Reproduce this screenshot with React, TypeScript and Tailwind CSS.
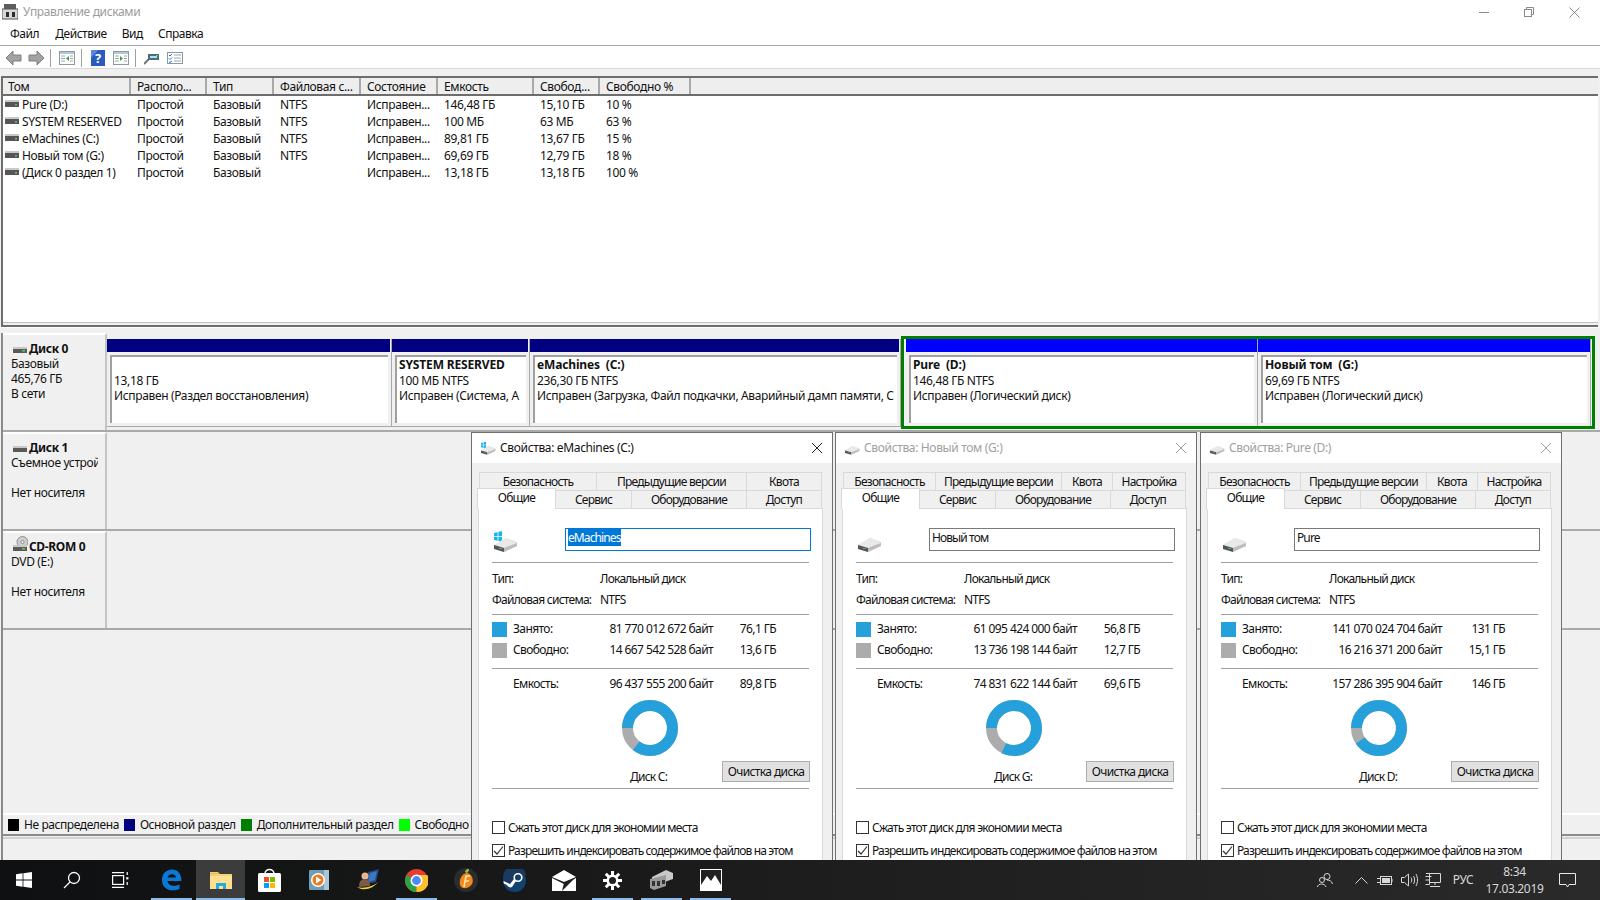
import React from 'react';

const font = { fontFamily: '"Noto Sans", "Liberation Sans", sans-serif' };

function Drive({ w = 24, win = false }: { w?: number; win?: boolean }) {
  return (
    <svg width={w} height={w * 0.92} viewBox="0 0 24 22">
      {win && (
        <g fill="#15b4ec">
          <path d="M0 3 L3.6 2.2 V6 H0Z" />
          <path d="M4.4 2 L8 1 V6 H4.4Z" />
          <path d="M0 6.8 H3.6 V10.6 L0 10Z" />
          <path d="M4.4 6.8 H8 V11.8 L4.4 11Z" />
        </g>
      )}
      <path d="M0 15 L12 8 L23 12 L23 16 L10 21 L0 18Z" fill="#d9d9d9" />
      <path d="M0 15 L10 18 L23 13 L12 8Z" fill="#e9e9e9" />
      <path d="M0 15 L10 18 V22 L0 19Z" fill="#555" />
      <path d="M10 18 L23 13 V16 L10 22Z" fill="#bdbdbd" />
      <rect x="5" y="18" width="3" height="1" fill="#3fbf4f" />
    </svg>
  );
}

function SmallDisk() {
  return (
    <svg width="14" height="9" viewBox="0 0 14 9" className="shrink-0">
      <rect x="0" y="0" width="14" height="2" fill="#c8c8c8" />
      <rect x="0" y="2" width="14" height="5" fill="#555" />
      <rect x="10" y="4" width="2" height="1.5" fill="#3ddc4a" />
    </svg>
  );
}

function BigDisk({ cd = false, green = true }: { cd?: boolean; green?: boolean }) {
  return (
    <svg width="15" height="16" viewBox="0 0 15 16" className="shrink-0">
      {cd && (
        <g>
          <circle cx="9.5" cy="6" r="5.5" fill="#cfcfcf" stroke="#8e8e8e" />
          <circle cx="9.5" cy="6" r="1.6" fill="#f4f4f4" stroke="#8e8e8e" />
        </g>
      )}
      <rect x="0" y="9" width="14" height="2" fill="#c8c8c8" />
      <rect x="0" y="11" width="14" height="4" fill="#5a5a5a" />
      {green && <rect x="9" y="12" width="3" height="1.5" fill="#3ddc4a" />}
    </svg>
  );
}

function Arrow({ flip = false }: { flip?: boolean }) {
  return (
    <svg width="17" height="16" viewBox="0 0 17 16" style={flip ? { transform: 'scaleX(-1)' } : undefined}>
      <path d="M8 1 L1 8 L8 15 V11 H16 V5 H8Z" fill="#a3a3a3" stroke="#7e7e7e" strokeWidth="1" />
    </svg>
  );
}

function PaneIcon({ right = false }: { right?: boolean }) {
  return (
    <svg width="16" height="14" viewBox="0 0 16 14">
      <rect x="0.5" y="0.5" width="15" height="13" fill="#fff" stroke="#8a9aa5" />
      <rect x="1" y="1" width="14" height="2" fill="#b9c6cf" />
      <path d="M2 5 H6 M2 7.5 H6 M2 10 H6 M11 5 H14 M11 7.5 H14 M11 10 H14" stroke="#9aa7b0" />
      {right ? <path d="M7 5 L10 7.5 L7 10Z" fill="#27a844" /> : <path d="M10 5 L7 7.5 L10 10Z" fill="#27a844" />}
    </svg>
  );
}

function Toolbar() {
  return (
    <div className="flex items-center h-[22px] pt-[2px] pl-[5px] bg-white shrink-0">
      <Arrow />
      <div className="w-[6px]" />
      <Arrow flip />
      <div className="w-px h-[18px] bg-[#a0a0a0] ml-[5px] mr-[8px]" />
      <PaneIcon />
      <div className="w-px h-[18px] bg-[#a0a0a0] ml-[6px] mr-[9px]" />
      <svg width="14" height="16" viewBox="0 0 14 16">
        <rect width="14" height="16" fill="#2a5bbd" />
        <path d="M0 0 H7 L0 8Z" fill="#5c8ae0" />
      </svg>
      <span className="w-0 text-white text-[13px] font-bold -translate-x-[10px] leading-none">?</span>
      <div className="w-[8px]" />
      <PaneIcon right />
      <div className="w-px h-[18px] bg-[#a0a0a0] ml-[6px] mr-[8px]" />
      <svg width="15" height="14" viewBox="0 0 15 14">
        <path d="M0 13 L6 7" stroke="#777" strokeWidth="2" />
        <rect x="4" y="3" width="11" height="6" fill="#4d6b78" />
        <rect x="6" y="5" width="7" height="2" fill="#aee2f2" />
        <rect x="12" y="4" width="2" height="1" fill="#3ddc4a" />
      </svg>
      <div className="w-[8px]" />
      <svg width="16" height="12" viewBox="0 0 16 12">
        <rect x="0.5" y="0.5" width="15" height="11" fill="#fff" stroke="#8a9aa5" />
        <path d="M2 3 L3 4 L5 2 M2 6.5 L3 7.5 L5 5.5 M2 10 L3 10.5 L5 9" stroke="#2b6fc9" fill="none" />
        <path d="M7 3 H14 M7 6 H14 M7 9 H14" stroke="#9aa7b0" />
      </svg>
    </div>
  );
}

const cols = [
  ['Том', 128],
  ['Располо...', 76],
  ['Тип', 67],
  ['Файловая с...', 87],
  ['Состояние', 77],
  ['Емкость', 96],
  ['Свобод...', 66],
  ['Свободно %', 91],
] as const;

const rows = [
  ['Pure (D:)', 'Простой', 'Базовый', 'NTFS', 'Исправен...', '146,48 ГБ', '15,10 ГБ', '10 %'],
  ['SYSTEM RESERVED', 'Простой', 'Базовый', 'NTFS', 'Исправен...', '100 МБ', '63 МБ', '63 %'],
  ['eMachines (C:)', 'Простой', 'Базовый', 'NTFS', 'Исправен...', '89,81 ГБ', '13,67 ГБ', '15 %'],
  ['Новый том (G:)', 'Простой', 'Базовый', 'NTFS', 'Исправен...', '69,69 ГБ', '12,79 ГБ', '18 %'],
  ['(Диск 0 раздел 1)', 'Простой', 'Базовый', '', 'Исправен...', '13,18 ГБ', '13,18 ГБ', '100 %'],
];

function VolumeTable() {
  return (
    <div className="h-[251px] border-t-2 border-l-2 border-b-2 border-[#6d6d6d] overflow-hidden flex flex-col">
      <div className="flex h-[18px] bg-[#eeeeee] border-b-2 border-[#6d6d6d] shrink-0">
        {cols.map(([c, w], i) => (
          <div key={c} style={{ width: w }} className={`shrink-0 border-r-2 border-[#a9a9a9] leading-[17px] truncate ${i === 0 ? 'pl-[5px]' : 'pl-[6px]'}`}>
            {c}
          </div>
        ))}
      </div>
      <div className="flex-1 bg-white">
        {rows.map((r) => (
          <div key={r[0]} className="flex h-[17px] leading-[17px]">
            {r.map((v, i) => (
              <div key={i} style={{ width: cols[i][1] }} className={`shrink-0 whitespace-nowrap ${i === 0 ? 'pl-[2px] flex items-center gap-[3px]' : 'pl-[6px]'}`}>
                {i === 0 && <SmallDisk />}
                {v}
              </div>
            ))}
          </div>
        ))}
      </div>
      <div className="h-[3px] shrink-0 bg-[#f0f0f0] border-t border-[#c0c0c0]" />
    </div>
  );
}

function Partition({ w, color, name, l1, l2, navy }: { w: number; color: string; name?: string; l1: string; l2: string; navy?: boolean }) {
  return (
    <div style={{ width: w }} className={`shrink-0 flex flex-col border-r border-[#a9a9a9] ${navy ? 'mt-[3px] mb-[2px] border-b' : ''}`}>
      <div className={`h-[13px] ${navy ? 'mr-[1px]' : ''}`} style={{ background: color }} />
      <div className="flex-1 pt-[3px] pl-[3px] pr-[3px] pb-[3px] min-h-0">
        <div className="h-full bg-white border-t-2 border-l-2 border-[#a0a0a0] pl-[2px] leading-[15.5px] overflow-hidden whitespace-nowrap">
          <div className="h-[15.5px] font-bold whitespace-pre tracking-[-0.15px]">{name}</div>
          <div>{l1}</div>
          <div>{l2}</div>
        </div>
      </div>
    </div>
  );
}

function DiskRow({ h, icon, name, lines, children }: { h: number; icon: React.ReactNode; name: string; lines: string[]; children?: React.ReactNode }) {
  return (
    <div style={{ height: h }} className="flex border-b-2 border-[#a9a9a9]">
      <div className="w-[104px] shrink-0 border-r-2 border-[#c4c4c4] border-t-2 border-t-white pl-[8px] pt-[4px] leading-[15px] overflow-hidden">
        <div className="flex items-end h-[17px] ml-[2px]">
          <span className="mb-[2px] mr-[1px]">{icon}</span>
          <span className="font-bold text-[12px]">{name}</span>
        </div>
        <div className="w-[87px] overflow-hidden whitespace-nowrap">
          {lines.map((l, i) => (
            <div key={i} className="h-[15px]">{l}</div>
          ))}
        </div>
      </div>
      <div className="flex-1 flex items-stretch pt-[3px] pb-[1px] min-w-0">{children}</div>
    </div>
  );
}

function Legend() {
  const items: [string, string][] = [
    ['#000000', 'Не распределена'],
    ['#000080', 'Основной раздел'],
    ['#008000', 'Дополнительный раздел'],
    ['#00ff00', 'Свободно'],
  ];
  return (
    <div className="flex items-center h-[21px] pl-[5px] gap-[5px] border-t-2 border-white tracking-[-0.42px]">
      {items.map(([c, t]) => (
        <div key={t} className="flex items-center gap-[5px]">
          <div className="w-[11px] h-[12px]" style={{ background: c }} />
          <span>{t}</span>
        </div>
      ))}
    </div>
  );
}

function Donut({ used }: { used: number }) {
  const r = 22.5;
  const c = 2 * Math.PI * r;
  return (
    <svg width="58" height="58" viewBox="0 0 58 58">
      <circle cx="29" cy="29" r={r} fill="none" stroke="#acacac" strokeWidth="11" />
      <circle
        cx="29"
        cy="29"
        r={r}
        fill="none"
        stroke="#26a0da"
        strokeWidth="11"
        strokeDasharray={`${c * used} ${c}`}
        transform="rotate(180 29 29)"
      />
    </svg>
  );
}

type DlgProps = {
  title: string;
  active?: boolean;
  label: string;
  letter: string;
  used: [string, string];
  free: [string, string];
  cap: [string, string];
  quota: boolean;
  win?: boolean;
  pct: number;
};

const Hr = () => <div className="h-px bg-[#a0a0a0] mx-[13px]" />;

function Dialog({ title, active, label, letter, used, free, cap, quota, win, pct }: DlgProps) {
  const row1 = quota
    ? [['Безопасность', 93], ['Предыдущие версии', 127], ['Квота', 52], ['Настройка', 74]]
    : [['Безопасность', 118], ['Предыдущие версии', 151], ['Квота', 76]];
  const row2 = [['Сервис', 77], ['Оборудование', 116], ['Доступ', 76]] as const;
  return (
    <div className="w-[362px] h-full border border-[#6f6f6f] border-b-0 bg-[#f0f0f0] flex flex-col overflow-hidden shrink-0 last:ml-[1px]">
      <div className="h-[30px] bg-white flex items-center pl-[9px] pr-[9px] shrink-0">
        <Drive w={15} win={win} />
        <span className={`ml-[4px] flex-1 ${active ? 'text-[#111]' : 'text-[#a0a0a0]'}`}>{title}</span>
        <svg width="12" height="12" viewBox="0 0 12 12">
          <path d="M1 1 L11 11 M11 1 L1 11" stroke={active ? '#222' : '#a0a0a0'} strokeWidth="1" />
        </svg>
      </div>
      <div className="flex-1 px-[6px] pt-[9px] relative tracking-[-0.75px]">
        <div className="flex pl-[1px] h-[18px]">
          {row1.map(([t, w]) => (
            <div key={t as string} style={{ width: w as number }} className="shrink-0 border border-b-0 border-[#d9d9d9] -ml-px first:ml-0 text-center leading-[18px]">
              {t}
            </div>
          ))}
        </div>
        <div className="flex h-[18px] pl-[78px] relative">
          <div className="absolute -left-px -top-[2px] w-[79px] h-[21px] bg-white border border-b-0 border-[#d9d9d9] z-10 text-center leading-[17px]">Общие</div>
          {row2.map(([t, w]) => (
            <div key={t} style={{ width: w }} className="shrink-0 border border-b-0 border-[#d9d9d9] -ml-px first:ml-0 text-center leading-[17px]">
              {t}
            </div>
          ))}
        </div>
        <div className="bg-white border border-[#d9d9d9] h-[400px] w-[345px] leading-[16px]">
          <div className="flex h-[53px] pl-[15px] pt-[19px]">
            <div className="w-[72px] pt-[2px]"><Drive w={24} win={win} /></div>
            <div className={`w-[246px] h-[23px] border ml-[-1px] pl-[2px] ${active ? 'border-[#0078d7]' : 'border-[#7a7a7a]'} leading-[18px] tracking-[-0.9px]`}>
              {active ? <span className="bg-[#0078d7] text-white">{label}</span> : label}
            </div>
          </div>
          <Hr />
          <div className="flex pl-[13px] h-[29px] pt-[8px]">
            <div className="w-[108px]">Тип:</div>
            <div>Локальный диск</div>
          </div>
          <div className="flex pl-[13px] h-[22px]">
            <div className="w-[108px] whitespace-nowrap">Файловая система:</div>
            <div>NTFS</div>
          </div>
          <Hr />
          {[used, free].map((v, i) => (
            <div key={i} className={`flex items-center pl-[13px] h-[15px] tracking-[-0.6px] ${i === 0 ? 'mt-[7px]' : 'mt-[6px]'}`}>
              <div className={`w-[15px] h-[15px] ${i === 0 ? 'bg-[#26a0da]' : 'bg-[#acacac]'}`} />
              <div className="ml-[6px] w-[60px] -translate-y-px">{i === 0 ? 'Занято:' : 'Свободно:'}</div>
              <div className="w-[140px] text-right whitespace-nowrap -translate-y-px">{v[0]}</div>
              <div className="w-[63px] text-right whitespace-nowrap -translate-y-px">{v[1]}</div>
            </div>
          ))}
          <div className="mt-[10px]"><Hr /></div>
          <div className="flex items-center pl-[34px] h-[15px] mt-[8px] tracking-[-0.6px]">
            <div className="w-[60px] -translate-y-px">Емкость:</div>
            <div className="w-[140px] text-right whitespace-nowrap -translate-y-px">{cap[0]}</div>
            <div className="w-[63px] text-right whitespace-nowrap -translate-y-px">{cap[1]}</div>
          </div>
          <div className="relative h-[96px]">
            <div className="absolute left-[142px] top-[7px]"><Donut used={pct} /></div>
            <div className="absolute left-[151px] top-[77px]">{letter}</div>
            <div className="absolute left-[243px] top-[69px] w-[88px] h-[21px] bg-[#e1e1e1] border border-[#adadad] text-center leading-[19px] tracking-[-0.6px]">Очистка диска</div>
          </div>
          <Hr />
          <div className="pl-[13px] pt-[32px]">
            <div className="flex items-center h-[13px]">
              <div className="w-[13px] h-[13px] border border-[#333] bg-white shrink-0" />
              <span className="ml-[3px]">Сжать этот диск для экономии места</span>
            </div>
            <div className="flex items-center h-[13px] mt-[10px]">
              <div className="w-[13px] h-[13px] border border-[#333] bg-white shrink-0 flex items-center justify-center">
                <svg width="11" height="11" viewBox="0 0 11 11"><path d="M1 6 L4 9 L10 1.5" fill="none" stroke="#333" strokeWidth="1.2" /></svg>
              </div>
              <span className="ml-[3px] whitespace-nowrap tracking-[-0.85px]">Разрешить индексировать содержимое файлов на этом</span>
            </div>
            <div className="pl-[16px] mt-[3px] whitespace-nowrap">диске в дополнение к свойствам файла</div>
          </div>
        </div>
      </div>
    </div>
  );
}

function Tb({ w = 49, on, hi, children }: { w?: number; on?: boolean; hi?: boolean; children: React.ReactNode }) {
  return (
    <div style={{ width: w }} className={`h-full shrink-0 relative flex items-center justify-center ${hi ? 'bg-[#3c3c3c]' : ''}`}>
      {children}
      {on && <div className={`absolute bottom-0 h-[2px] bg-[#8cbcec] ${hi ? 'left-0 right-0' : 'left-[4px] right-[4px]'}`} />}
    </div>
  );
}

function Taskbar() {
  return (
    <div className="h-10 shrink-0 flex items-stretch relative z-20 bg-gradient-to-r from-[#0f1011] via-[#1d1d1d] to-[#2a2a2a] text-[#d8d8d8]">
      <Tb w={48}>
        <svg width="16" height="16" viewBox="0 0 16 16" fill="#fff"><path d="M0 2.2 L6.6 1.3 V7.6 H0Z M7.4 1.2 L16 0 V7.6 H7.4Z M0 8.4 H6.6 V14.7 L0 13.8Z M7.4 8.4 H16 V16 L7.4 14.8Z" /></svg>
      </Tb>
      <Tb w={48}>
        <svg width="18" height="18" viewBox="0 0 18 18" fill="none" stroke="#fff" strokeWidth="1.3"><circle cx="11" cy="7" r="5.5" /><path d="M7 11 L1 17" /></svg>
      </Tb>
      <Tb w={48}>
        <svg width="17" height="16" viewBox="0 0 17 16" fill="none" stroke="#fff" strokeWidth="1.2"><path d="M0 .6 H12 M0 15.4 H12" /><rect x=".6" y="3.6" width="11" height="8.8" /><rect x="14.2" y="5.2" width="2.2" height="2.2" fill="#fff" stroke="none" /><path d="M15.2 0 V3 M15.2 10 V13" /></svg>
      </Tb>
      <div className="w-[3px]" />
      <Tb on>
        <svg width="21" height="22" viewBox="0 0 21 22"><path d="M1 11 C1 4 6 .5 11 .5 C17 .5 20.5 5 20.5 12 H6.5 C7 16 12 18.5 18.5 15.5 V20 C11 23 1 21 1 11 Z M6.5 8.5 H15 C15 4 7.5 4 6.5 8.5 Z" fill="#0a78d7" /><path d="M1 11 C2 7 5 4 8 3 C5 5 3 8 3 10Z" fill="#0a78d7" /></svg>
      </Tb>
      <Tb on hi>
        <svg width="22" height="18" viewBox="0 0 22 18"><path d="M0 1 H8 L10 3 H22 V18 H0Z" fill="#f3d27a" /><rect x="0" y="5" width="22" height="13" fill="#fde18e" /><path d="M0 3 H9 V2 H0Z" fill="#e6b84c" /><path d="M6 18 V12 H16 V18 H13 V15 H9 V18Z" fill="#29a8e8" /></svg>
      </Tb>
      <Tb>
        <svg width="23" height="26" viewBox="0 0 23 26"><path d="M7 7 C7 1 16 1 16 7" fill="none" stroke="#fff" strokeWidth="1.5" /><rect x="0" y="6" width="23" height="19" rx="1.5" fill="#fff" /><rect x="6" y="10" width="5" height="5" fill="#f25022" /><rect x="12" y="10" width="5" height="5" fill="#7fba00" /><rect x="6" y="16" width="5" height="5" fill="#00a4ef" /><rect x="12" y="16" width="5" height="5" fill="#ffb900" /></svg>
      </Tb>
      <Tb>
        <svg width="20" height="20" viewBox="0 0 20 20"><rect width="20" height="20" rx="1" fill="#6f9db8" /><rect x="15" width="5" height="20" fill="#a9c6d6" /><circle cx="9" cy="10" r="7" fill="#fff" /><circle cx="9" cy="10" r="5.5" fill="#ee7a1c" /><path d="M7 6.5 L12.5 10 L7 13.5Z" fill="#fff" /></svg>
      </Tb>
      <Tb>
        <svg width="24" height="24" viewBox="0 0 24 24"><path d="M12 4 L23 1 L20 14 L10 16Z" fill="#224a83" /><path d="M14 5 L21 3 L19 12 L12 14Z" fill="#3a78c2" /><circle cx="9" cy="8" r="3.5" fill="#e9b78f" /><path d="M3 19 C3 12 6 11 9 11 C12 11 14 13 14 18Z" fill="#7c5a45" /><path d="M1 19 C8 24 18 20 22 14 C18 18 8 21 1 19Z" fill="#f1cf3d" /></svg>
      </Tb>
      <Tb on>
        <svg width="23" height="23" viewBox="0 0 23 23"><circle cx="11.5" cy="11.5" r="11.5" fill="#e53d2f" /><path d="M11.5 11.5 L1.5 6 A11.5 11.5 0 0 0 11.5 23Z" fill="#2ba245" /><path d="M11.5 6 H22.3 A11.5 11.5 0 0 1 11.5 23Z" fill="#fbc02d" /><circle cx="11.5" cy="11.5" r="5.2" fill="#4c8bf5" stroke="#fff" strokeWidth="1.6" /></svg>
      </Tb>
      <Tb>
        <svg width="24" height="24" viewBox="0 0 24 24"><circle cx="12" cy="12" r="12" fill="#2c2c2c" /><path d="M13 5 C7 6 5 12 6 17 C7 21 14 22 18 16 C20 12 18 6 13 5Z" fill="#f08a1d" /><path d="M12 5 C10 3 12 1 15 1 C15 3 14 5 12 5Z" fill="#8bc34a" /><path d="M12 8 H16 M12 8 L10 19 M11 13 H15" stroke="#ffe9b0" strokeWidth="1.6" fill="none" /></svg>
      </Tb>
      <Tb>
        <svg width="23" height="23" viewBox="0 0 23 23"><circle cx="11.5" cy="11.5" r="11.5" fill="#10446f" /><path d="M0 13 L8 16.5 L12 10 L23 6 A11.5 11.5 0 0 0 0.2 9.5Z" fill="#1a3a5f" /><circle cx="15" cy="8.5" r="3.8" fill="none" stroke="#fff" strokeWidth="1.6" /><path d="M0.5 12 L7 15 L11 10 L13 12 L9 18 C7 19 5 18 4 16 L0.8 14.5Z" fill="#fff" /></svg>
      </Tb>
      <Tb>
        <svg width="24" height="21" viewBox="0 0 24 21"><path d="M0 7 L12 0 L24 7 L12 12Z" fill="#fff" /><path d="M0 8 L12 14 L24 8 V21 H0Z" fill="#fff" /><path d="M24 7 L12 13 L10 21 Z" fill="#1f1f1f" /></svg>
      </Tb>
      <Tb on>
        <svg width="19" height="19" viewBox="0 0 19 19"><g stroke="#fff" strokeWidth="3"><path d="M9.5 0 V19 M0 9.5 H19 M2.8 2.8 L16.2 16.2 M16.2 2.8 L2.8 16.2" /></g><circle cx="9.5" cy="9.5" r="6" fill="#fff" /><circle cx="9.5" cy="9.5" r="3.5" fill="#1f1f1f" /></svg>
      </Tb>
      <Tb on>
        <svg width="23" height="20" viewBox="0 0 23 20"><path d="M2 7 L16 0 L23 3 V9 L9 14 L2 11Z" fill="#c9c9c9" /><path d="M0 9 L16 5 V16 L4 20 L0 18Z" fill="#9a9a9a" /><rect x="2" y="11" width="3" height="5" fill="#333" /><rect x="7" y="11" width="3" height="5" fill="#333" /><rect x="12" y="10" width="3" height="4" fill="#333" /></svg>
      </Tb>
      <Tb on>
        <svg width="22" height="22" viewBox="0 0 22 22"><rect x=".5" y=".5" width="21" height="21" fill="#222" stroke="#fff" /><path d="M1 21 V16 L7 7 L11 12 L15 6 L21 16 V21Z" fill="#fff" /></svg>
      </Tb>
      <div className="flex-1" />
      <div className="w-[32px] flex items-center justify-center mr-[8px]">
        <svg width="16" height="16" viewBox="0 0 16 16" fill="none" stroke="#d8d8d8"><circle cx="10" cy="4.5" r="3" /><circle cx="5" cy="8" r="2.5" /><path d="M.5 15 C1 11 8 11 9 15 M10 8 C12 8 15 9 15.5 12" /></svg>
      </div>
      <div className="w-[24px] flex items-center justify-center">
        <svg width="13" height="7" viewBox="0 0 13 7" fill="none" stroke="#d8d8d8"><path d="M.5 6.5 L6.5 .5 L12.5 6.5" /></svg>
      </div>
      <div className="w-[24px] flex items-center justify-center">
        <svg width="16" height="11" viewBox="0 0 16 11" fill="none" stroke="#d8d8d8"><rect x="3.5" y="1.5" width="11" height="8" /><rect x="5" y="3" width="8" height="5" fill="#d8d8d8" stroke="none" /><path d="M0 3.5 H3 M0 7.5 H3 M15 4 V7" /></svg>
      </div>
      <div className="w-[24px] flex items-center justify-center">
        <svg width="17" height="14" viewBox="0 0 17 14" fill="none" stroke="#d8d8d8"><path d="M.5 4.5 H3.5 L7.5 1 V13 L3.5 9.5 H.5Z M10 4.5 C11 6 11 8 10 9.5 M12.5 3 C14 5.5 14 8.5 12.5 11 M15 1 C17 5 17 9 15 13" /></svg>
      </div>
      <div className="w-[24px] flex items-center justify-center">
        <svg width="16" height="15" viewBox="0 0 16 15" fill="none" stroke="#d8d8d8"><path d="M3.5 .5 H15.5 V9.5 H5 M.5 3.5 H6.5 M.5 7 H5 M10 9.5 V12 M5 13.5 H15 M1 .5 H4.5 V11.5 H.5" /></svg>
      </div>
      <div className="w-[36px] flex items-center justify-center text-[12px]">РУС</div>
      <div className="w-[67px] flex flex-col items-center justify-center text-[12px] leading-[17px]">
        <div>8:34</div>
        <div>17.03.2019</div>
      </div>
      <div className="w-[38px] flex items-center justify-center mr-[14px]">
        <svg width="17" height="15" viewBox="0 0 17 15" fill="none" stroke="#e8e8e8"><path d="M.5 .5 H16.5 V11.5 H10 L8.5 14 L7 11.5 H.5Z" /></svg>
      </div>
    </div>
  );
}

export default function App() {
  return (
    <div style={font} className="w-[1600px] h-[900px] flex flex-col overflow-hidden bg-[#f0f0f0] text-[12px] text-[#111] tracking-[-0.35px] relative">
      <div className="h-[24px] bg-white flex items-center pl-[2px] shrink-0">
        <svg width="16" height="16" viewBox="0 0 16 16"><rect x="2" y="0" width="12" height="5" fill="#5d5d5d" /><rect x="0" y="5" width="16" height="10" fill="#d8d8d8" stroke="#555" /><rect x="4" y="8" width="3" height="5" fill="#2d2d2d" /><rect x="10" y="8" width="3" height="5" fill="#2d2d2d" /></svg>
        <span className="ml-[5px] text-[#9c9c9c]">Управление дисками</span>
        <div className="flex-1" />
        <svg width="10" height="1" viewBox="0 0 10 1" className="mr-[35px]"><rect width="10" height="1" fill="#8a8a8a" /></svg>
        <svg width="10" height="10" viewBox="0 0 10 10" fill="none" stroke="#8a8a8a" className="mr-[35px]"><rect x=".5" y="2.5" width="7" height="7" /><path d="M2.5 2.5 V.5 H9.5 V7.5 H7.5" /></svg>
        <svg width="11" height="11" viewBox="0 0 11 11" fill="none" stroke="#8a8a8a" className="mr-[20px]"><path d="M.5 .5 L10.5 10.5 M10.5 .5 L.5 10.5" /></svg>
      </div>
      <div className="h-[22px] bg-white flex items-center shrink-0 border-b border-b-[#a9a9a9] pl-[10px] pb-[2px] tracking-[-0.45px]">
        <span className="mr-[16px]">Файл</span>
        <span className="mr-[15px]">Действие</span>
        <span className="mr-[15px]">Вид</span>
        <span>Справка</span>
      </div>
      <Toolbar />
      <div className="h-[8px] bg-[#f0f0f0] border-t border-[#d9d9d9] shrink-0" />
      <div className="pl-[1px] pr-[2px] shrink-0"><VolumeTable /></div>
      <div className="h-[6px] border-t border-white shrink-0" />
      <div className="flex-1 relative min-h-0 border-l-2 border-[#8a8a8a] ml-[1px]">
        <DiskRow h={99} icon={<BigDisk />} name="Диск 0" lines={['Базовый', '465,76 ГБ', 'В сети']}>
          <Partition navy w={285} color="#000080" l1="13,18 ГБ" l2="Исправен (Раздел восстановления)" />
          <Partition navy w={138} color="#000080" name="SYSTEM RESERVED" l1="100 МБ NTFS" l2="Исправен (Система, А" />
          <Partition navy w={371} color="#000080" name="eMachines  (C:)" l1="236,30 ГБ NTFS" l2="Исправен (Загрузка, Файл подкачки, Аварийный дамп памяти, С" />
          <div className="w-[694px] shrink-0 border-[3px] border-[#008000] flex pl-[2px]">
            <Partition w={352} color="#0000ff" name="Pure  (D:)" l1="146,48 ГБ NTFS" l2="Исправен (Логический диск)" />
            <Partition w={333} color="#0000ff" name="Новый том  (G:)" l1="69,69 ГБ NTFS" l2="Исправен (Логический диск)" />
          </div>
        </DiskRow>
        <DiskRow h={99} icon={<BigDisk green={false} />} name="Диск 1" lines={['Съемное устройство', '', 'Нет носителя']} />
        <DiskRow h={99} icon={<BigDisk cd />} name="CD-ROM 0" lines={['DVD (E:)', '', 'Нет носителя']} />
        <div className="absolute left-0 right-0 top-[480px] bg-[#f0f0f0]"><Legend /></div>
        <div className="absolute left-0 right-0 top-[501px] h-[2px] bg-[#8a8a8a]" />
        <div className="absolute left-0 right-0 top-[504px] h-[2px] bg-[#d0d0d0]" />
        <div className="absolute left-[468px] top-[99px] bottom-[-1px] flex gap-[2px]">
          <Dialog pct={0.85} title="Свойства: eMachines (C:)" active win label="eMachines" letter="Диск C:" used={['81 770 012 672 байт', '76,1 ГБ']} free={['14 667 542 528 байт', '13,6 ГБ']} cap={['96 437 555 200 байт', '89,8 ГБ']} quota={false} />
          <Dialog pct={0.82} title="Свойства: Новый том (G:)" label="Новый том" letter="Диск G:" used={['61 095 424 000 байт', '56,8 ГБ']} free={['13 736 198 144 байт', '12,7 ГБ']} cap={['74 831 622 144 байт', '69,6 ГБ']} quota />
          <Dialog pct={0.9} title="Свойства: Pure (D:)" label="Pure" letter="Диск D:" used={['141 070 024 704 байт', '131 ГБ']} free={['16 216 371 200 байт', '15,1 ГБ']} cap={['157 286 395 904 байт', '146 ГБ']} quota />
        </div>
      </div>
      <Taskbar />
    </div>
  );
}
